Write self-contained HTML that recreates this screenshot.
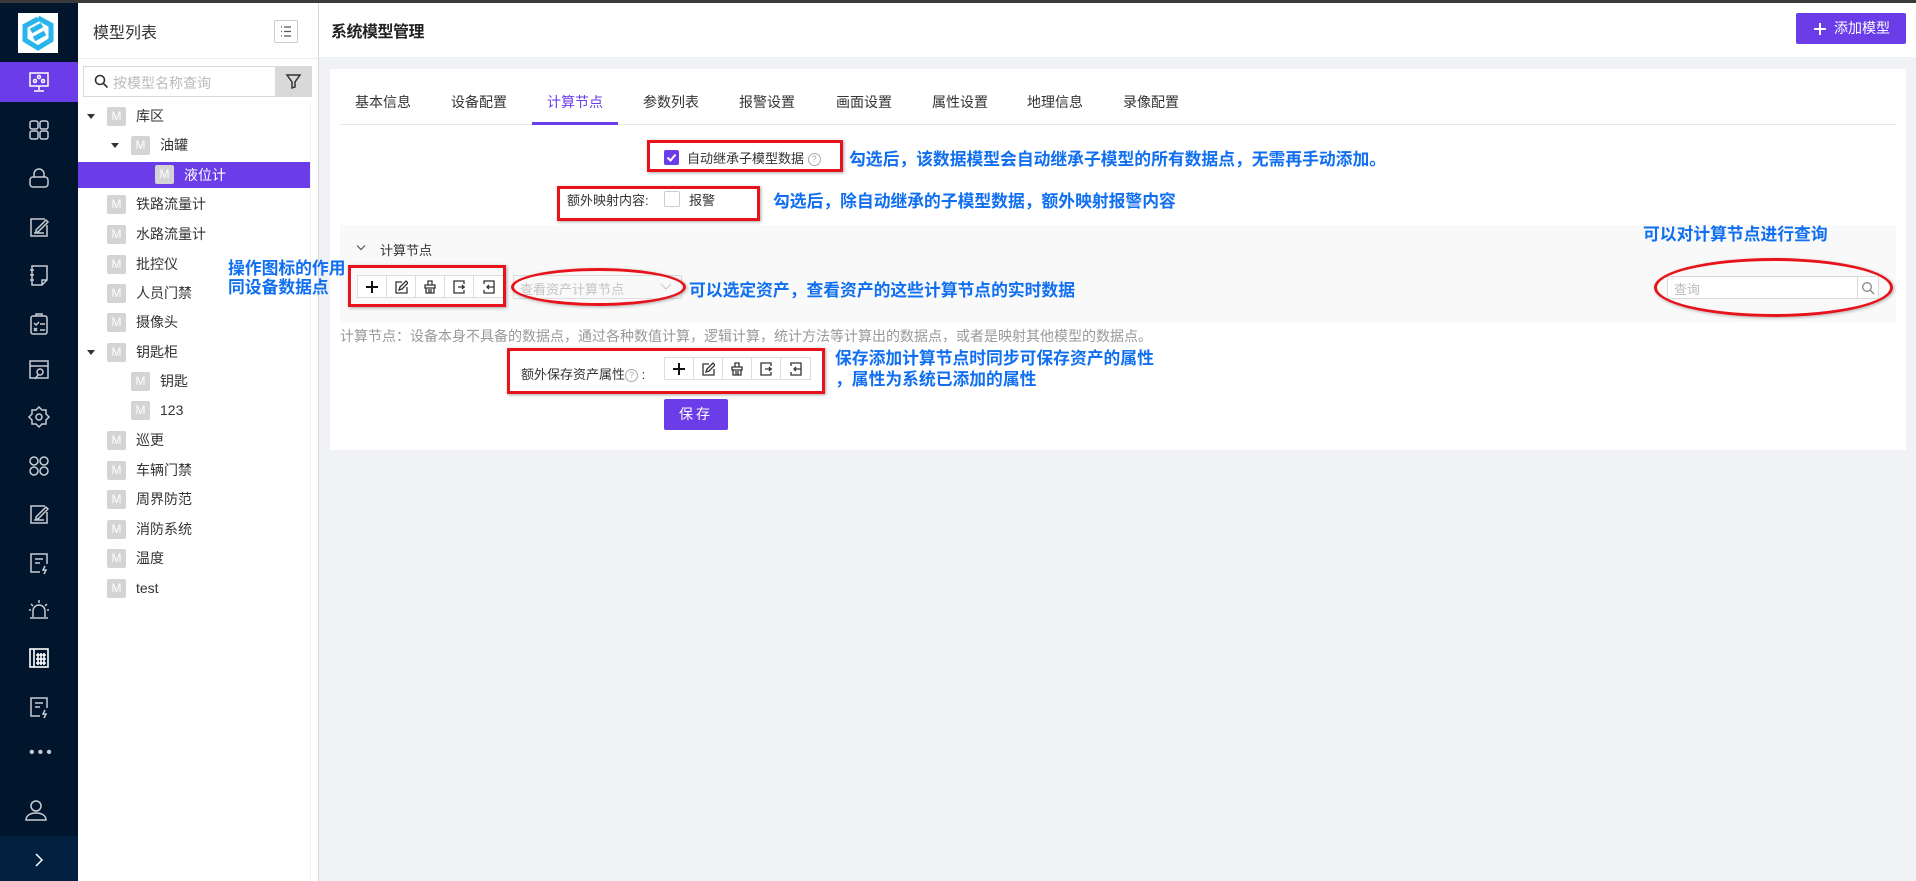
<!DOCTYPE html>
<html><head><meta charset="utf-8">
<style>
*{box-sizing:border-box;margin:0;padding:0}
body{width:1916px;height:881px;overflow:hidden;background:#f0f2f5;font-family:"Liberation Sans","Noto Sans CJK SC",sans-serif;color:#333;position:relative}
.a{position:absolute}
.nav{left:0;top:0;width:78px;height:881px;background:#01152d}
.ico{position:absolute;left:27px;width:24px;height:24px}
.tree{left:78px;top:0;width:241px;height:881px;background:#fff;border-right:1px solid #d9d9d9}
.row{position:absolute;height:29px;line-height:29px;font-size:14px;color:#333;white-space:nowrap}
.m{position:absolute;top:5px;width:19px;height:19px;background:#d4d4d4;color:#fff;font-size:12px;line-height:19px;text-align:center;border-radius:2px}
.caret{position:absolute;top:12px;width:0;height:0;border-left:4px solid transparent;border-right:4px solid transparent;border-top:5px solid #333}
.blue{color:#0f6ff0;font-weight:bold;font-size:16.8px;white-space:nowrap;position:absolute}
.red{position:absolute;border:3px solid #e8121a;box-shadow:1px 1px 3px rgba(0,0,0,.35)}
.ell{position:absolute;border:3px solid #e8121a;border-radius:50%;box-shadow:1px 1px 3px rgba(0,0,0,.3)}
.btns{position:absolute;display:flex;border:1px solid #ddd;background:#fff;height:23px}
.btns div{width:29px;height:21px;border-right:1px solid #ddd;display:flex;align-items:center;justify-content:center}
.btns div:last-child{border-right:none}
.tab{position:absolute;top:92px;font-size:14px;color:#333}
.help{display:inline-block;width:13px;height:13px;border:1px solid #aaa;border-radius:50%;font-size:9px;line-height:11px;text-align:center;color:#aaa;vertical-align:middle}
</style></head><body>
<div class="a" style="left:0;top:0;width:1916px;height:3px;background:#3a3a3a;z-index:5"></div>
<div class="a nav">
  <div class="a" style="left:18px;top:13px;width:40px;height:40px;background:#fff">
    <svg width="40" height="40" viewBox="0 0 40 40"><path d="M20 5 L33 12 L33 27 L20 35 L7 27 L7 13 L20 6" fill="none" stroke="#2ab4ec" stroke-width="5"/><path d="M13 18 L24 12 M16 26 L27 20" stroke="#2ab4ec" stroke-width="5"/></svg>
  </div>
  <div class="a" style="left:0;top:62px;width:78px;height:40px;background:#6a3de8"></div>
  <svg class="ico" style="top:70px" viewBox="0 0 24 24" fill="none" stroke="#fff" stroke-width="1.5"><rect x="3" y="3" width="18" height="13"/><path d="M12 16v4M7 21h10"/><circle cx="12" cy="7" r="1.5"/><circle cx="8" cy="11" r="1.5"/><circle cx="16" cy="11" r="1.5"/></svg>
  <svg class="ico" style="top:118px" viewBox="0 0 24 24" fill="none" stroke="#c9ccd3" stroke-width="1.5"><rect x="3" y="3" width="8" height="8" rx="2"/><rect x="13" y="3" width="8" height="8" rx="2"/><rect x="3" y="13" width="8" height="8" rx="2"/><rect x="13" y="13" width="8" height="8" rx="2"/></svg>
  <svg class="ico" style="top:166px" viewBox="0 0 24 24" fill="none" stroke="#c9ccd3" stroke-width="1.5"><rect x="3" y="11" width="18" height="10" rx="3"/><path d="M7 11V8a5 5 0 0 1 10 0v3"/></svg>
  <svg class="ico" style="top:215px" viewBox="0 0 24 24" fill="none" stroke="#c9ccd3" stroke-width="1.5"><path d="M18 4H4v17h16V10"/><path d="M9 15l10-10 2 2-10 10H9z"/><path d="M7 18h10"/></svg>
  <svg class="ico" style="top:263px" viewBox="0 0 24 24" fill="none" stroke="#c9ccd3" stroke-width="1.5"><path d="M5 3h15v14l-5 5H5z"/><path d="M3 7h4M3 12h4M3 17h4M15 22v-5h5"/></svg>
  <svg class="ico" style="top:312px" viewBox="0 0 24 24" fill="none" stroke="#c9ccd3" stroke-width="1.5"><rect x="4" y="4" width="16" height="18" rx="2"/><path d="M9 4V2h6v2M7 11l2 2 3-3M13 12h5M7 16l3 3M10 16l-3 3M13 18h5"/></svg>
  <svg class="ico" style="top:358px" viewBox="0 0 24 24" fill="none" stroke="#c9ccd3" stroke-width="1.5"><rect x="3" y="3" width="18" height="17"/><path d="M3 8h18"/><circle cx="13" cy="14" r="3"/><path d="M8 21l3-4"/></svg>
  <svg class="ico" style="top:405px" viewBox="0 0 24 24" fill="none" stroke="#c9ccd3" stroke-width="1.5"><circle cx="12" cy="12" r="3"/><path d="M12 2l3 3h4v4l3 3-3 3v4h-4l-3 3-3-3H5v-4l-3-3 3-3V5h4z"/></svg>
  <svg class="ico" style="top:454px" viewBox="0 0 24 24" fill="none" stroke="#c9ccd3" stroke-width="1.5"><circle cx="7" cy="7" r="4"/><circle cx="17" cy="7" r="4"/><circle cx="7" cy="17" r="4"/><circle cx="17" cy="17" r="4"/></svg>
  <svg class="ico" style="top:502px" viewBox="0 0 24 24" fill="none" stroke="#c9ccd3" stroke-width="1.5"><path d="M18 4H4v17h16V10"/><path d="M9 15l10-10 2 2-10 10H9z"/><path d="M7 18h10"/></svg>
  <svg class="ico" style="top:551px" viewBox="0 0 24 24" fill="none" stroke="#c9ccd3" stroke-width="1.5"><path d="M20 13V3H4v18h9"/><path d="M8 8h8M8 12h5M18 15l-2 4h3l-2 4"/></svg>
  <svg class="ico" style="top:598px" viewBox="0 0 24 24" fill="none" stroke="#c9ccd3" stroke-width="1.5"><path d="M6 19v-6a6 6 0 0 1 12 0v6M3 20h18M12 2v3M4 6l2 2M20 6l-2 2M2 12h2M20 12h2"/></svg>
  <svg class="ico" style="top:646px" viewBox="0 0 24 24" fill="none" stroke="#fff" stroke-width="1.6"><rect x="3" y="3" width="18" height="18"/><path d="M7 3v18M11 7v12M14 7v12M17 7v12M9 9h10M9 13h10M9 17h10"/></svg>
  <svg class="ico" style="top:695px" viewBox="0 0 24 24" fill="none" stroke="#c9ccd3" stroke-width="1.5"><path d="M20 13V3H4v18h9"/><path d="M8 8h8M8 12h5M18 15l-2 4h3l-2 4"/></svg>
  <div class="a" style="left:29px;top:744px;color:#c9ccd3;font-size:16px;letter-spacing:3px">•••</div>
  <svg class="ico" style="top:798px;left:24px" viewBox="0 0 24 24" fill="none" stroke="#c9ccd3" stroke-width="1.5"><circle cx="12" cy="8" r="5"/><path d="M2 22c0-5 5-7 10-7s10 2 10 7z"/></svg>
  <div class="a" style="left:0;top:836px;width:78px;height:45px;background:#022040"></div>
  <svg class="a" style="left:33px;top:853px" width="12" height="14" viewBox="0 0 12 14" fill="none" stroke="#fff" stroke-width="1.5"><path d="M3 1l6 6-6 6"/></svg>
</div>
<div class="a tree">
  <div class="a" style="left:15px;top:19px;font-size:16px;color:#333">模型列表</div>
  <div class="a" style="left:196px;top:20px;width:24px;height:23px;border:1px solid #ccc;border-radius:2px"><svg width="22" height="21" viewBox="0 0 22 21" stroke="#555" stroke-width="1.3"><path d="M6 6h1M9 6h7M6 10.5h1M9 10.5h7M6 15h1M9 15h7"/></svg></div>
  <div class="a" style="left:0;top:58px;width:240px;height:1px;background:#eee"></div>
  <div class="a" style="left:5px;top:66px;width:194px;height:31px;border:1px solid #d9d9d9;border-right:none"></div>
  <svg class="a" style="left:16px;top:74px" width="15" height="15" viewBox="0 0 15 15" fill="none" stroke="#333" stroke-width="1.6"><circle cx="6" cy="6" r="4.5"/><path d="M9.5 9.5l4 4"/></svg>
  <div class="a" style="left:35px;top:73px;font-size:14px;color:#bbb">按模型名称查询</div>
  <div class="a" style="left:197px;top:66px;width:37px;height:31px;background:#d9d9d9"><svg width="37" height="31" viewBox="0 0 37 31" fill="none" stroke="#333" stroke-width="1.5"><path d="M12 9h13l-5 7v5l-3 1v-6z"/></svg></div>
  <div class="row" style="top:102px;left:0;width:240px"><span class="caret" style="left:9px"></span><span class="m" style="left:29px">M</span><span style="position:absolute;left:58px">库区</span></div>
  <div class="row" style="top:131px;left:0;width:240px"><span class="caret" style="left:33px"></span><span class="m" style="left:53px">M</span><span style="position:absolute;left:82px">油罐</span></div>
  <div class="row" style="top:162px;left:0;width:232px;height:26px;background:#6a3de8;line-height:26px"><span class="m" style="left:77px;top:3px">M</span><span style="position:absolute;left:106px;color:#fff">液位计</span></div>
  <div class="row" style="top:190px;left:0"><span class="m" style="left:29px">M</span><span style="position:absolute;left:58px">铁路流量计</span></div>
  <div class="row" style="top:220px;left:0"><span class="m" style="left:29px">M</span><span style="position:absolute;left:58px">水路流量计</span></div>
  <div class="row" style="top:250px;left:0"><span class="m" style="left:29px">M</span><span style="position:absolute;left:58px">批控仪</span></div>
  <div class="row" style="top:279px;left:0"><span class="m" style="left:29px">M</span><span style="position:absolute;left:58px">人员门禁</span></div>
  <div class="row" style="top:308px;left:0"><span class="m" style="left:29px">M</span><span style="position:absolute;left:58px">摄像头</span></div>
  <div class="row" style="top:338px;left:0;width:240px"><span class="caret" style="left:9px"></span><span class="m" style="left:29px">M</span><span style="position:absolute;left:58px">钥匙柜</span></div>
  <div class="row" style="top:367px;left:0"><span class="m" style="left:53px">M</span><span style="position:absolute;left:82px">钥匙</span></div>
  <div class="row" style="top:396px;left:0"><span class="m" style="left:53px">M</span><span style="position:absolute;left:82px">123</span></div>
  <div class="row" style="top:426px;left:0"><span class="m" style="left:29px">M</span><span style="position:absolute;left:58px">巡更</span></div>
  <div class="row" style="top:456px;left:0"><span class="m" style="left:29px">M</span><span style="position:absolute;left:58px">车辆门禁</span></div>
  <div class="row" style="top:485px;left:0"><span class="m" style="left:29px">M</span><span style="position:absolute;left:58px">周界防范</span></div>
  <div class="row" style="top:515px;left:0"><span class="m" style="left:29px">M</span><span style="position:absolute;left:58px">消防系统</span></div>
  <div class="row" style="top:544px;left:0"><span class="m" style="left:29px">M</span><span style="position:absolute;left:58px">温度</span></div>
  <div class="row" style="top:574px;left:0"><span class="m" style="left:29px">M</span><span style="position:absolute;left:58px">test</span></div>
  <div class="a" style="left:232px;top:104px;width:1px;height:777px;background:#f2f2f2"></div>
</div>
<div class="a" style="left:319px;top:3px;width:1597px;height:54px;background:#fff"></div>
<div class="a" style="left:331px;top:18px;font-size:16px;color:#222;font-weight:bold;letter-spacing:-0.5px">系统模型管理</div>
<div class="a" style="left:1796px;top:13px;width:110px;height:31px;background:#6a3de8;border-radius:2px;color:#fff;font-size:14px;line-height:31px;padding-left:38px">添加模型</div>
<svg class="a" style="left:1813px;top:22px" width="14" height="14" viewBox="0 0 14 14" stroke="#fff" stroke-width="2"><path d="M7 1v12M1 7h12"/></svg>
<div class="a" style="left:330px;top:69px;width:1576px;height:381px;background:#fff"></div>
<div class="tab" style="left:355px">基本信息</div>
<div class="tab" style="left:451px">设备配置</div>
<div class="tab" style="left:547px;color:#6a3de8">计算节点</div>
<div class="tab" style="left:643px">参数列表</div>
<div class="tab" style="left:739px">报警设置</div>
<div class="tab" style="left:836px">画面设置</div>
<div class="tab" style="left:932px">属性设置</div>
<div class="tab" style="left:1027px">地理信息</div>
<div class="tab" style="left:1123px">录像配置</div>
<div class="a" style="left:340px;top:124px;width:1556px;height:1px;background:#e8e8e8"></div>
<div class="a" style="left:532px;top:122px;width:86px;height:3px;background:#6a3de8"></div>

<div class="a" style="left:664px;top:150px;width:15px;height:15px;background:#6a3de8;border-radius:2px"><svg width="15" height="15" viewBox="0 0 15 15" fill="none" stroke="#fff" stroke-width="2"><path d="M3.5 7.5l3 3 5-6"/></svg></div>
<div class="a" style="left:687px;top:148px;font-size:13px;color:#333;white-space:nowrap">自动继承子模型数据 <span class="help">?</span></div>
<div class="red" style="left:647px;top:140px;width:196px;height:32px"></div>
<div class="blue" style="left:849px;top:146px">勾选后，该数据模型会自动继承子模型的所有数据点，无需再手动添加。</div>

<div class="a" style="left:567px;top:190px;font-size:13px;color:#333">额外映射内容:</div>
<div class="a" style="left:664px;top:191px;width:16px;height:16px;border:1px solid #ccc;border-radius:2px;background:#fff"></div>
<div class="a" style="left:689px;top:190px;font-size:13px;color:#333">报警</div>
<div class="red" style="left:557px;top:186px;width:203px;height:35px"></div>
<div class="blue" style="left:773px;top:188px">勾选后，除自动继承的子模型数据，额外映射报警内容</div>

<div class="a" style="left:340px;top:225px;width:1556px;height:97px;background:#f9f9f9"></div>
<svg class="a" style="left:356px;top:244px" width="10" height="8" viewBox="0 0 10 8" fill="none" stroke="#555" stroke-width="1.2"><path d="M1 1.5l4 4 4-4"/></svg>
<div class="a" style="left:380px;top:240px;font-size:13px;color:#333">计算节点</div>
<div class="btns" style="left:357px;top:275px">
  <div><svg width="14" height="14" viewBox="0 0 14 14" stroke="#111" stroke-width="2"><path d="M7 1v12M1 7h12"/></svg></div>
  <div><svg width="14" height="14" viewBox="0 0 14 14" fill="none" stroke="#333" stroke-width="1.3"><path d="M8 2H2v11h11V7"/><path d="M5 10l1-3 6-6 2 2-6 6z"/></svg></div>
  <div><svg width="14" height="14" viewBox="0 0 14 14" fill="none" stroke="#333" stroke-width="1.3"><path d="M5 1h4v4H5zM2 5h10v3H2zM3 8v5h8V8M6 9v4M8 9v4"/></svg></div>
  <div><svg width="14" height="14" viewBox="0 0 14 14" fill="none" stroke="#333" stroke-width="1.3"><path d="M12 4V1H2v12h10v-3M6 7h7M10 5l2 2-2 2"/></svg></div>
  <div><svg width="14" height="14" viewBox="0 0 14 14" fill="none" stroke="#333" stroke-width="1.3"><path d="M2 4V1h10v12H2v-3M12 7H5M7 5L5 7l2 2"/></svg></div>
</div>
<div class="red" style="left:348px;top:265px;width:158px;height:42px"></div>
<div class="a" style="left:513px;top:275px;width:169px;height:24px;border:1px solid #ddd;background:#f9f9f9"></div>
<div class="a" style="left:520px;top:279px;font-size:13px;color:#c4c4c4">查看资产计算节点</div>
<svg class="a" style="left:660px;top:283px" width="12" height="8" viewBox="0 0 12 8" fill="none" stroke="#ccc" stroke-width="1.2"><path d="M1 1l5 5 5-5"/></svg>
<div class="ell" style="left:511px;top:268px;width:175px;height:38px"></div>
<div class="blue" style="left:689px;top:277px">可以选定资产，查看资产的这些计算节点的实时数据</div>
<div class="blue" style="left:228px;top:259px;line-height:19px">操作图标的作用<br>同设备数据点</div>

<div class="a" style="left:1667px;top:276px;width:212px;height:23px;border:1px solid #d9d9d9;background:#fff"></div>
<div class="a" style="left:1857px;top:276px;width:1px;height:23px;background:#d9d9d9"></div>
<div class="a" style="left:1674px;top:279px;font-size:13px;color:#bbb">查询</div>
<svg class="a" style="left:1861px;top:281px" width="14" height="14" viewBox="0 0 14 14" fill="none" stroke="#888" stroke-width="1.3"><circle cx="6" cy="6" r="4.3"/><path d="M9 9l4 4"/></svg>
<div class="ell" style="left:1654px;top:258px;width:239px;height:59px"></div>
<div class="blue" style="left:1643px;top:221px">可以对计算节点进行查询</div>

<div class="a" style="left:340px;top:326px;font-size:14px;color:#999;white-space:nowrap">计算节点：设备本身不具备的数据点，通过各种数值计算，逻辑计算，统计方法等计算出的数据点，或者是映射其他模型的数据点。</div>

<div class="a" style="left:521px;top:364px;font-size:13px;color:#333;white-space:nowrap">额外保存资产属性<span class="help">?</span> :</div>
<div class="btns" style="left:664px;top:357px">
  <div><svg width="14" height="14" viewBox="0 0 14 14" stroke="#111" stroke-width="2"><path d="M7 1v12M1 7h12"/></svg></div>
  <div><svg width="14" height="14" viewBox="0 0 14 14" fill="none" stroke="#333" stroke-width="1.3"><path d="M8 2H2v11h11V7"/><path d="M5 10l1-3 6-6 2 2-6 6z"/></svg></div>
  <div><svg width="14" height="14" viewBox="0 0 14 14" fill="none" stroke="#333" stroke-width="1.3"><path d="M5 1h4v4H5zM2 5h10v3H2zM3 8v5h8V8M6 9v4M8 9v4"/></svg></div>
  <div><svg width="14" height="14" viewBox="0 0 14 14" fill="none" stroke="#333" stroke-width="1.3"><path d="M12 4V1H2v12h10v-3M6 7h7M10 5l2 2-2 2"/></svg></div>
  <div><svg width="14" height="14" viewBox="0 0 14 14" fill="none" stroke="#333" stroke-width="1.3"><path d="M2 4V1h10v12H2v-3M12 7H5M7 5L5 7l2 2"/></svg></div>
</div>
<div class="red" style="left:507px;top:348px;width:318px;height:46px"></div>
<div class="blue" style="left:835px;top:348px;line-height:21px">保存添加计算节点时同步可保存资产的属性<br>，属性为系统已添加的属性</div>

<div class="a" style="left:664px;top:399px;width:64px;height:31px;background:#6a3de8;border-radius:2px;color:#fff;font-size:14px;line-height:31px;text-align:center;letter-spacing:3px">保存</div>
</body></html>
